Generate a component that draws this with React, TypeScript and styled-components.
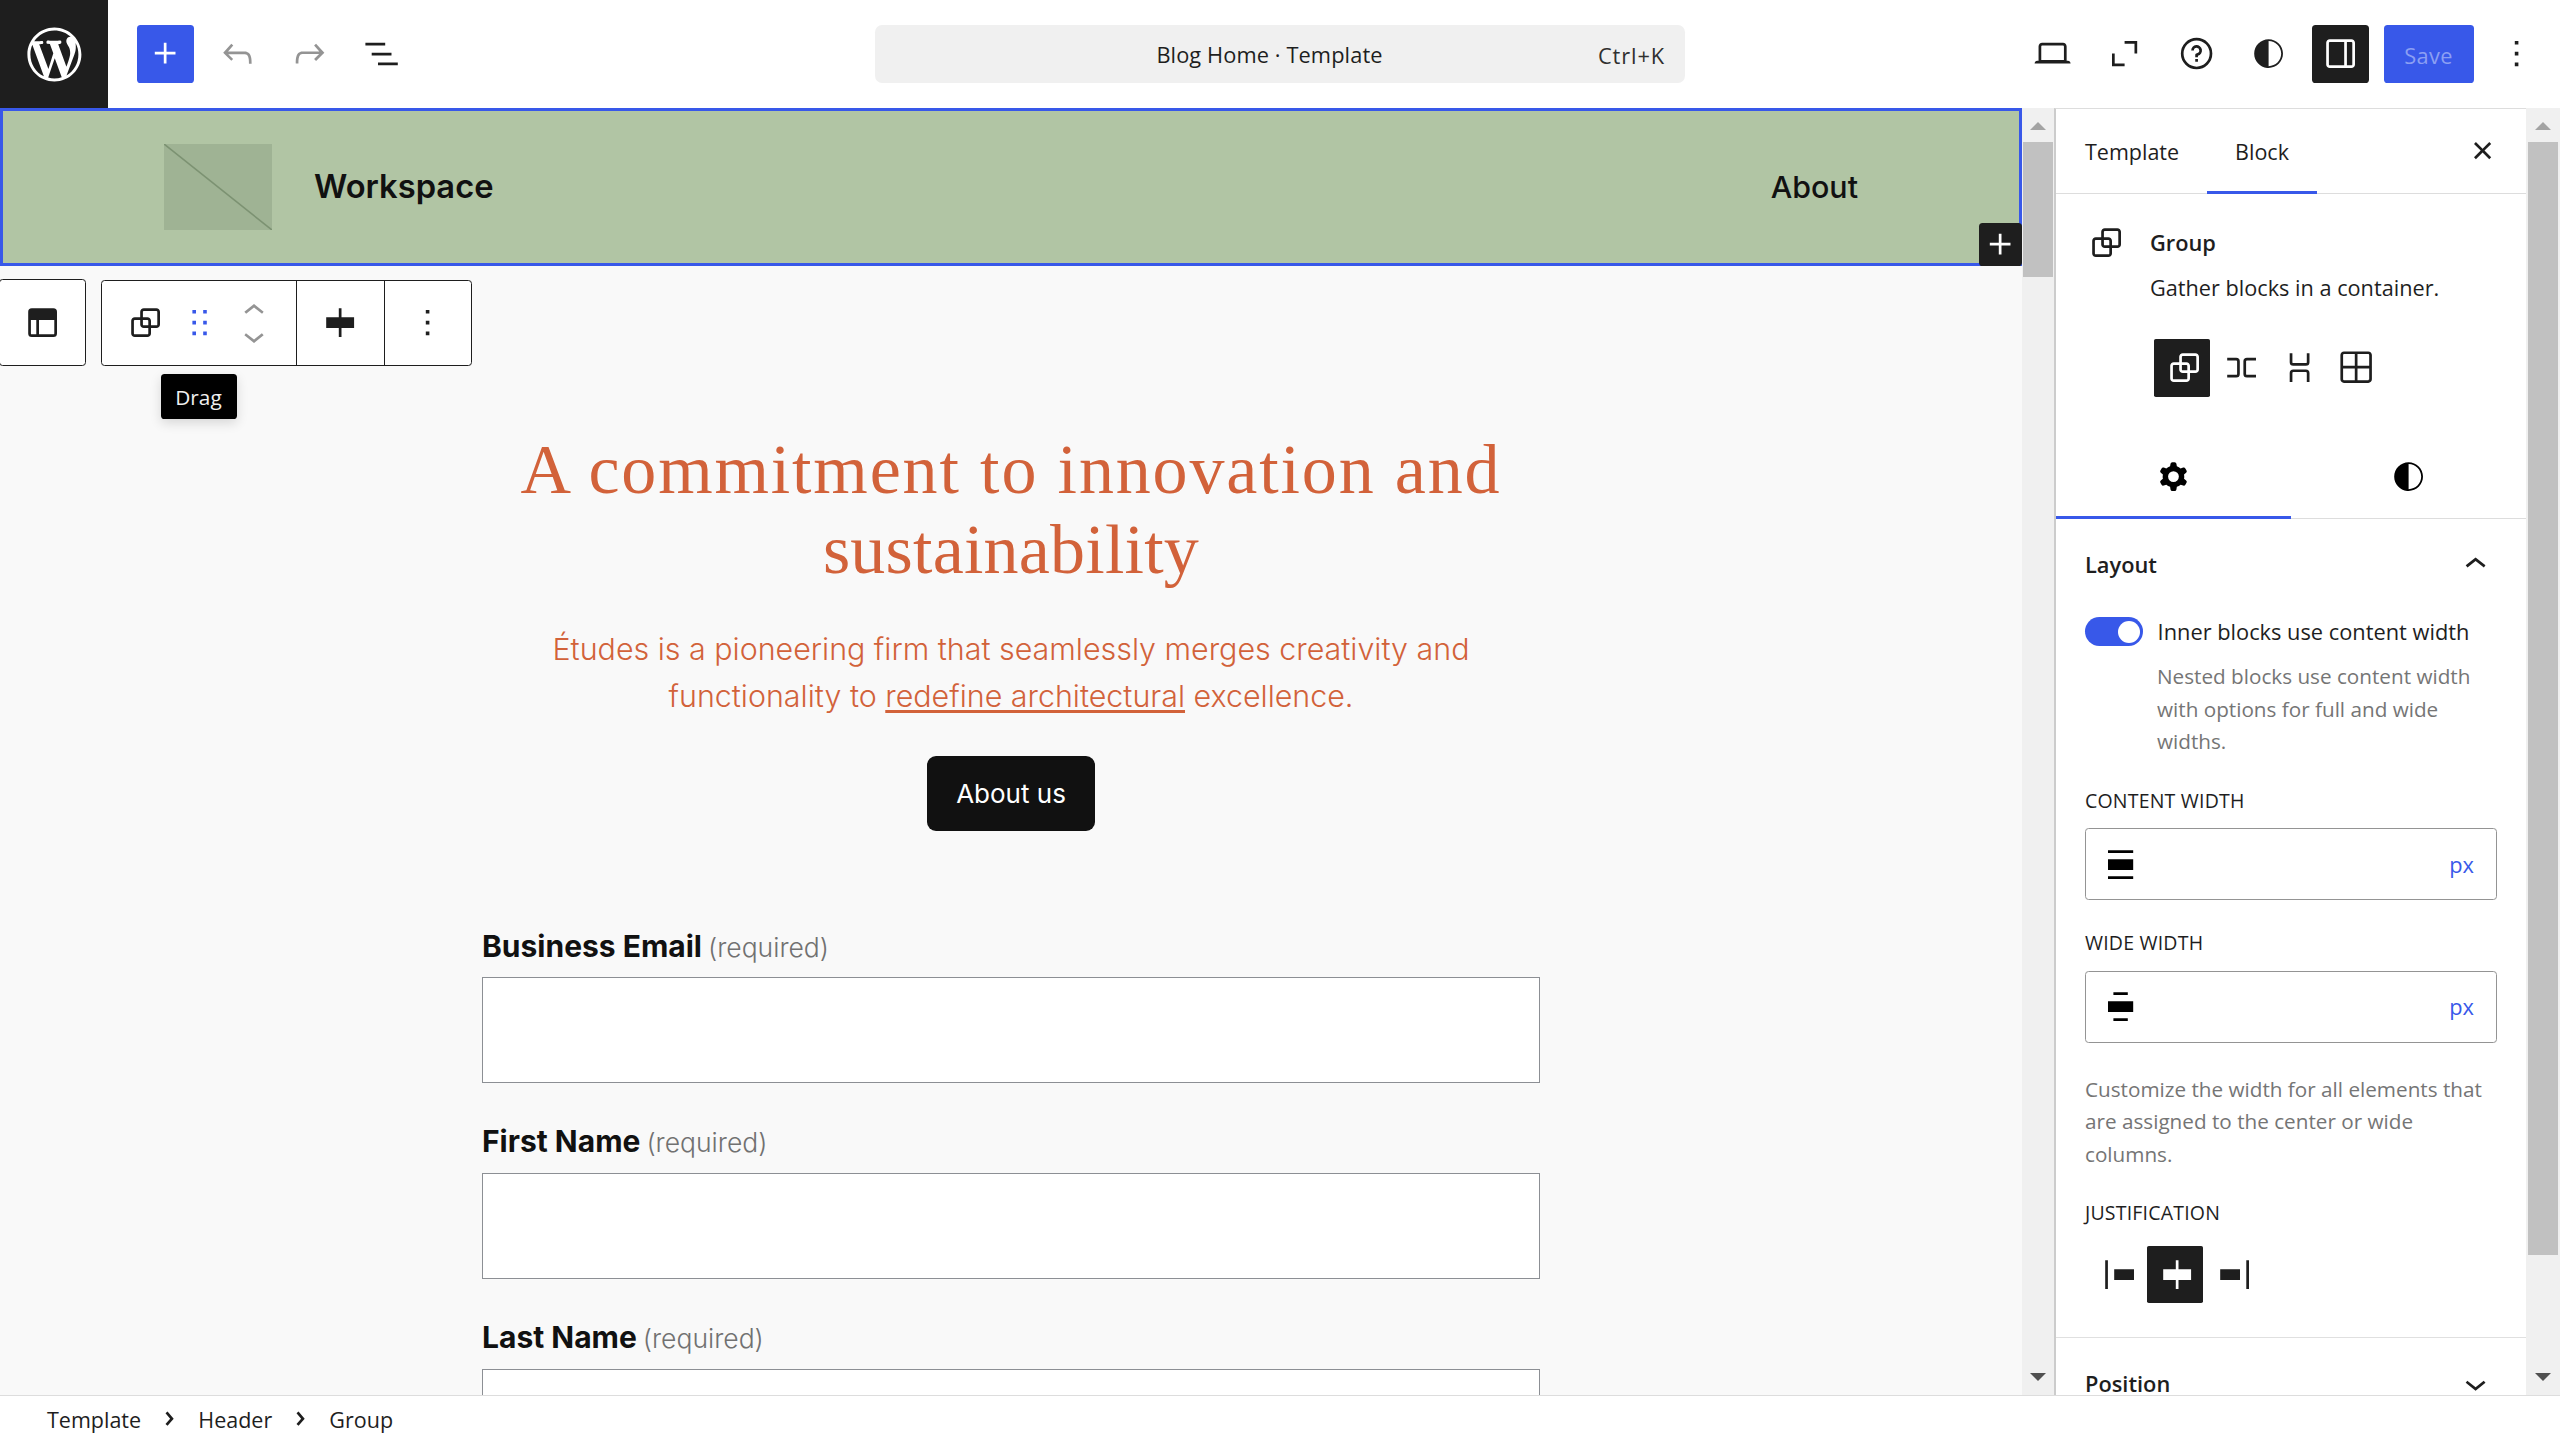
import React from 'react'
import styled, { createGlobalStyle, css } from 'styled-components'

const UI_FONT = `'Open Sans', 'Noto Sans', sans-serif`
const BODY_FONT = `Inter, 'Liberation Sans', sans-serif`
const HEADING_FONT = `'Liberation Serif', serif`

const INK = '#1e1e1e'
const ACCENT = '#3858e9'

const GlobalStyle = createGlobalStyle`
  * {
    box-sizing: border-box;
  }

  body {
    margin: 0;
    overflow: hidden;
    background: #fff;
  }

  button {
    margin: 0;
    padding: 0;
    border: 0;
    background: none;
    color: inherit;
    font: inherit;
    letter-spacing: inherit;
  }

  h1, h2, p {
    margin: 0;
  }
`

const ICONS = {
  plus: 'M11 12.5V17.5H12.5V12.5H17.5V11H12.5V6H11V11H6V12.5H11Z',
  undo:
    'M18.3 11.7c-.6-.6-1.4-.9-2.3-.9H6.7l2.9-3.3-1.1-1-4.5 5L8.5 16l1-1-2.7-2.7H16c.5 0 .9.2 1.3.5 1 1 1 3.4 1 4.5v.3h1.5v-.2c0-1.5 0-4.3-1.5-5.7z',
  redo:
    'M15.6 6.5l-1.1 1 2.9 3.3H8c-.9 0-1.7.3-2.3.9-1.4 1.5-1.4 4.2-1.4 5.6v.2h1.5v-.3c0-1.1 0-3.5 1-4.5.3-.3.7-.5 1.3-.5h9.2L14.5 15l1.1 1.1 4.6-4.6-4.6-5z',
  listView: 'M3 6h11v1.5H3V6Zm3.5 5.5h11V13h-11v-1.5ZM21 17H10v1.5h11V17Z',
  desktop:
    'M20.5 16h-.7V8c0-1.1-.9-2-2-2H6.2c-1.1 0-2 .9-2 2v8h-.7c-.8 0-1.5.7-1.5 1.5h20c0-.8-.7-1.5-1.5-1.5zM5.7 8c0-.3.2-.5.5-.5h11.6c.3 0 .5.2.5.5v7.6H5.7V8z',
  zoomOut: 'M12 5h7v7h-1.5V6.5H12V5ZM5 12h1.5v5.5H12V19H5v-7Z',
  help:
    'M12 4.75a7.25 7.25 0 100 14.5 7.25 7.25 0 000-14.5zM3.25 12a8.75 8.75 0 1117.5 0 8.75 8.75 0 01-17.5 0zM12 8.75a1.5 1.5 0 01.167 2.99c-.465.052-.917.44-.917 1.01V14h1.5v-.845A3 3 0 109 10.25h1.5a1.5 1.5 0 011.5-1.5zM11.25 15v1.5h1.5V15h-1.5z',
  styles:
    'M12 4c-4.4 0-8 3.6-8 8v.1c0 4.1 3.2 7.5 7.2 7.9h.8c4.4 0 8-3.6 8-8s-3.6-8-8-8zm0 15V5c3.9 0 7 3.1 7 7s-3.1 7-7 7z',
  drawer:
    'M18 4H6c-1.1 0-2 .9-2 2v12c0 1.1.9 2 2 2h12c1.1 0 2-.9 2-2V6c0-1.1-.9-2-2-2zm-4 14.5H6c-.3 0-.5-.2-.5-.5V6c0-.3.2-.5.5-.5h8v13zm4.5-.5c0 .3-.2.5-.5.5h-2.5v-13H18c.3 0 .5.2.5.5v12z',
  more: 'M13 19h-2v-2h2v2zm0-6h-2v-2h2v2zm0-6h-2V5h2v2z',
  header:
    'M18.5 10.5H10v8h8a.5.5 0 00.5-.5v-7.5zm-10 0h-3V18a.5.5 0 00.5.5h2.5v-8zM6 4a2 2 0 00-2 2v12a2 2 0 002 2h12a2 2 0 002-2V6a2 2 0 00-2-2H6z',
  group:
    'M18 4h-7c-1.1 0-2 .9-2 2v3H6c-1.1 0-2 .9-2 2v7c0 1.1.9 2 2 2h7c1.1 0 2-.9 2-2v-3h3c1.1 0 2-.9 2-2V6c0-1.1-.9-2-2-2zm-4.5 14c0 .3-.2.5-.5.5H6c-.3 0-.5-.2-.5-.5v-7c0-.3.2-.5.5-.5h3V13c0 1.1.9 2 2 2h2.5v3zm0-4.5H11c-.3 0-.5-.2-.5-.5v-2.5H13c.3 0 .5.2.5.5v2.5zm5-.5c0 .3-.2.5-.5.5h-3V11c0-1.1-.9-2-2-2h-2.5V6c0-.3.2-.5.5-.5h7c.3 0 .5.2.5.5v7z',
  drag:
    'M8 7h2V5H8v2zm0 6h2v-2H8v2zm0 6h2v-2H8v2zm6-14v2h2V5h-2zm0 8h2v-2h-2v2zm0 6h2v-2h-2v2z',
  chevronUp: 'M6.5 12.4L12 8l5.5 4.4-.9 1.2L12 10l-4.5 3.6-1-1.2z',
  chevronDown: 'M17.5 11.6L12 16l-5.5-4.4.9-1.2L12 14l4.5-3.6 1 1.2z',
  chevronRightSmall:
    'M10.8622 8.04053L14.2805 12.0286L10.8622 16.0167L9.72327 15.0405L12.3049 12.0286L9.72327 9.01672L10.8622 8.04053Z',
  justifyLeft: 'M9 9v6h11V9H9zM4 20h1.5V4H4v16z',
  justifyCenter: 'M12.5 15v5H11v-5H4V9h7V4h1.5v5h7v6h-7Z',
  justifyRight: 'M4 15h11V9H4v6zM18.5 4v16H20V4h-1.5z',
  close:
    'M12 13.06l3.712 3.713 1.061-1.06L13.061 12l3.712-3.712-1.06-1.06L12 10.938 8.288 7.227l-1.061 1.06L10.939 12l-3.712 3.712 1.06 1.061L12 13.061z',
  row:
    'M4 6.5h5a2 2 0 0 1 2 2v7a2 2 0 0 1-2 2H4V16h5a.5.5 0 0 0 .5-.5v-7A.5.5 0 0 0 9 8H4V6.5Zm16 0h-5a2 2 0 0 0-2 2v7a2 2 0 0 0 2 2h5V16h-5a.5.5 0 0 1-.5-.5v-7A.5.5 0 0 1 15 8h5V6.5Z',
  stack:
    'M17.5 4v5a2 2 0 0 1-2 2h-7a2 2 0 0 1-2-2V4H8v5a.5.5 0 0 0 .5.5h7A.5.5 0 0 0 16 9V4h1.5Zm0 16v-5a2 2 0 0 0-2-2h-7a2 2 0 0 0-2 2v5H8v-5a.5.5 0 0 1 .5-.5h7a.5.5 0 0 1 .5.5v5h1.5Z',
  grid:
    'm3 5c0-1.10457.89543-2 2-2h13.5c1.1046 0 2 .89543 2 2v13.5c0 1.1046-.8954 2-2 2h-13.5c-1.10457 0-2-.8954-2-2zm2-.5h6v6.5h-6.5v-6c0-.27614.22386-.5.5-.5zm-.5 8v6c0 .2761.22386.5.5.5h6v-6.5zm8 0v6.5h6c.2761 0 .5-.2239.5-.5v-6zm0-8v6.5h6.5v-6c0-.27614-.2239-.5-.5-.5z',
  cog:
    'M10.289 4.836A1 1 0 0111.275 4h1.306a1 1 0 01.987.836l.244 1.466c.787.26 1.503.679 2.108 1.218l1.393-.522a1 1 0 011.216.437l.653 1.13a1 1 0 01-.23 1.273l-1.148.944a6.025 6.025 0 010 2.435l1.149.946a1 1 0 01.23 1.272l-.653 1.13a1 1 0 01-1.216.437l-1.394-.522c-.605.54-1.32.958-2.108 1.218l-.244 1.466a1 1 0 01-.987.836h-1.306a1 1 0 01-.986-.836l-.244-1.466a5.995 5.995 0 01-2.108-1.218l-1.394.522a1 1 0 01-1.217-.436l-.653-1.131a1 1 0 01.23-1.272l1.149-.946a6.026 6.026 0 010-2.435l-1.148-.944a1 1 0 01-.23-1.272l.653-1.131a1 1 0 011.217-.437l1.393.522a5.994 5.994 0 012.108-1.218l.244-1.466zM14.929 12a3 3 0 11-6 0 3 3 0 016 0z',
  alignNone: 'M19 5.5H5V4h14v1.5ZM19 20H5v-1.5h14V20ZM5 9h14v6H5V9Z',
  stretchWide: 'M16 5.5H8V4h8v1.5ZM16 20H8v-1.5h8V20ZM5 9h14v6H5V9Z',
}

const WORDPRESS =
  'M20 10c0-5.51-4.49-10-10-10C4.48 0 0 4.49 0 10c0 5.52 4.48 10 10 10 5.51 0 10-4.48 10-10zM7.78 15.37L4.37 6.22c.55-.02 1.17-.08 1.17-.08.5-.06.44-1.13-.06-1.11 0 0-1.45.11-2.37.11-.18 0-.37 0-.58-.01C4.12 2.69 6.87 1.11 10 1.11c2.33 0 4.45.87 6.05 2.34-.68-.11-1.65.39-1.65 1.58 0 .74.45 1.36.9 2.1.35.61.55 1.36.55 2.46 0 1.49-1.4 5-1.4 5l-3.03-8.37c.54-.02.82-.17.82-.17.5-.05.44-1.25-.06-1.22 0 0-1.44.12-2.38.12-.87 0-2.33-.12-2.33-.12-.5-.03-.56 1.2-.06 1.22l.92.08 1.26 3.41zM17.41 10c.24-.64.74-1.87.43-4.25.7 1.29 1.05 2.71 1.05 4.25 0 3.29-1.73 6.24-4.4 7.78.97-2.59 1.94-5.2 2.92-7.78zM6.1 18.09C3.12 16.65 1.11 13.53 1.11 10c0-1.3.23-2.48.72-3.59C3.25 10.3 4.67 14.2 6.1 18.09zm4.03-6.63l2.58 6.98c-.86.29-1.76.45-2.71.45-.79 0-1.57-.11-2.29-.33.81-2.38 1.62-4.74 2.42-7.1z'

const Svg = styled.svg`
  display: block;
  flex-shrink: 0;
  fill: currentColor;
`

interface IconProps {
  name: keyof typeof ICONS
  size?: number
}

const Icon: React.FC<IconProps> = ({ name, size = 43.2 }) => (
  <Svg width={size} height={size} viewBox="0 0 24 24">
    <path d={ICONS[name]} fillRule="evenodd" clipRule="evenodd" />
  </Svg>
)

const Page = styled.div`
  display: flex;
  flex-direction: column;
  width: 2560px;
  height: 1440px;
  background: #fff;
  color: ${INK};
  font-family: ${UI_FONT};
  font-size: 21.8px;
`

/* Top bar */

const TopBar = styled.header`
  display: grid;
  grid-template-columns: 875px 810px 1fr;
  align-items: center;
  height: 108px;
  flex-shrink: 0;
`

const TopLeft = styled.div`
  display: flex;
  align-items: center;
  gap: 14.4px;
`

const SiteLogo = styled.div`
  display: flex;
  align-items: center;
  justify-content: center;
  width: 108px;
  height: 108px;
  margin-right: 14.4px;
  background: ${INK};
  color: #fff;
`

const ToolButton = styled.button<{ $variant?: 'primary' | 'pressed' | 'disabled' }>`
  display: flex;
  align-items: center;
  justify-content: center;
  width: 57.6px;
  height: 57.6px;
  border-radius: 3.6px;

  ${({ $variant }) =>
    $variant === 'primary' &&
    css`
      background: ${ACCENT};
      color: #fff;
    `}
  ${({ $variant }) =>
    $variant === 'pressed' &&
    css`
      background: ${INK};
      color: #fff;
    `}
  ${({ $variant }) =>
    $variant === 'disabled' &&
    css`
      color: #949494;
    `}
`

const CommandBar = styled.div`
  display: grid;
  grid-template-columns: 1fr auto 1fr;
  align-items: center;
  height: 57.6px;
  padding: 1px 20px 0 21px;
  border-radius: 7.2px;
  background: #f0f0f0;
`

const DocumentTitle = styled.span`
  margin-right: 22px;
  letter-spacing: 0.1px;
`

const Shortcut = styled.span`
  justify-self: end;
  padding-top: 1px;
  color: #2f2f2f;
  letter-spacing: 0.9px;
`

const TopRight = styled.div`
  display: flex;
  align-items: center;
  justify-content: flex-end;
  gap: 14.4px;
  padding-right: 14.4px;
`

const SaveButton = styled.button`
  width: 90px;
  height: 57.6px;
  padding-top: 3px;
  border-radius: 3.6px;
  background: ${ACCENT};
  color: #8b9ff3;
  letter-spacing: 0.4px;
`

/* Editor body */

const Main = styled.div`
  display: flex;
  height: 1287px;
  flex-shrink: 0;
`

const Canvas = styled.main`
  position: relative;
  width: 2022px;
  height: 100%;
  overflow: hidden;
  background: #f9f9f9;
  color: #111;
  font-family: ${BODY_FONT};
`

const SiteHeader = styled.div`
  position: relative;
  display: flex;
  align-items: center;
  height: 158px;
  padding: 0 161px;
  border: 3px solid ${ACCENT};
  background: #b1c5a4;
`

const LogoPlaceholder = styled.div`
  width: 108px;
  height: 86px;
  background: #9fb394;

  svg {
    display: block;
  }
`

const SiteTitle = styled.span`
  margin-left: 42px;
  padding-bottom: 2px;
  font-size: 32.7px;
  font-weight: 600;
`

const NavLink = styled.span`
  margin-left: auto;
  font-size: 30.4px;
  font-weight: 500;
`

const Appender = styled.button`
  position: absolute;
  right: -3px;
  bottom: -3px;
  width: 43.2px;
  height: 43.2px;
  border-radius: 3.6px;
  background: ${INK};
  color: #fff;
`

const BlockTools = styled.div`
  position: absolute;
  top: 171px;
  left: -1px;
  display: flex;
  align-items: flex-end;
  gap: 15px;
`

const ToolGroup = styled.div<{ $height: number }>`
  display: flex;
  height: ${({ $height }) => $height}px;
  border: 1px solid ${INK};
  border-radius: 3.6px;
  background: #fff;
  color: ${INK};
`

const ToolCell = styled.div<{ $width: number; $divided?: boolean }>`
  display: flex;
  align-items: center;
  justify-content: center;
  width: ${({ $width }) => $width}px;
  border-left: ${({ $divided }) => ($divided ? `1px solid ${INK}` : '0')};
`

const DragHandle = styled(ToolCell)`
  color: ${ACCENT};
`

const Movers = styled(ToolCell)`
  flex-direction: column;
  color: #949494;

  svg + svg {
    margin-top: -17px;
  }
`

const Tooltip = styled.div`
  position: absolute;
  top: 266px;
  left: 161px;
  width: 76px;
  height: 45px;
  border-radius: 3.6px;
  background: #000;
  box-shadow: 0 4px 12px rgba(0, 0, 0, 0.14);
  color: #f0f0f0;
  font-family: ${UI_FONT};
  font-size: 20.8px;
  line-height: 46px;
  text-align: center;
  text-indent: -1px;
`

const Content = styled.div`
  display: flex;
  flex-direction: column;
  align-items: center;
  padding-top: 163.5px;
  text-align: center;
`

const Heading = styled.h1`
  color: #d2623a;
  font-family: ${HEADING_FONT};
  font-size: 70px;
  font-weight: 400;
  line-height: 80.6px;
  white-space: nowrap;
`

const HeadingLine = styled.span<{ $tracking: number }>`
  display: block;
  letter-spacing: ${({ $tracking }) => $tracking}px;
`

const Intro = styled.p`
  margin-top: 35.6px;
  color: #d2623a;
  font-size: 30.4px;
  font-weight: 300;
  line-height: 46.8px;
  white-space: nowrap;

  a {
    text-decoration: underline;
    text-decoration-thickness: 3px;
    text-underline-offset: 3px;
    text-decoration-skip-ink: none;
  }
`

const AboutButton = styled.button`
  width: 168px;
  height: 75px;
  margin-top: 36px;
  border-radius: 9px;
  background: #111;
  color: #fff;
  font-size: 26px;
`

const Form = styled.form`
  width: 1058px;
  margin-top: 57px;
  text-align: left;
`

const Label = styled.label`
  display: block;
  height: 46.8px;
  margin-top: 35px;
  font-size: 30px;
  font-weight: 700;
  line-height: 46.8px;
  white-space: nowrap;

  small {
    margin-left: 6px;
    color: #717171;
    font-size: 26.5px;
    font-weight: 300;
    line-height: 1;
  }
`

const Field = styled.div`
  height: 106px;
  margin-top: 7.8px;
  border: 1px solid #8c8f94;
  background: #fff;
`

/* Scrollbars */

const Track = styled.div<{ $width: number }>`
  display: flex;
  flex-direction: column;
  align-items: center;
  width: ${({ $width }) => $width}px;
  height: 100%;
  padding: 14px 0;
  flex-shrink: 0;
  background: #f0f0f0;
`

const Arrow = styled.i<{ $down?: boolean }>`
  border: 8px solid transparent;
  ${({ $down }) =>
    $down
      ? css`
          margin-top: auto;
          border-top-color: #505050;
          border-bottom-width: 0;
        `
      : css`
          border-bottom-color: #a3a3a3;
          border-top-width: 0;
        `}
`

const Thumb = styled.div<{ $height: number }>`
  width: 30px;
  height: ${({ $height }) => $height}px;
  margin-top: 12px;
  background: #c1c1c1;
`

/* Settings sidebar */

const Sidebar = styled.aside`
  width: 472px;
  height: 100%;
  overflow: hidden;
  border-top: 1px solid #ddd;
  border-left: 2px solid #ccc;
`

const SidebarTabs = styled.div`
  display: flex;
  height: 85px;
  padding-right: 15px;
  border-bottom: 1px solid #ddd;
`

const SidebarTab = styled.button<{ $active?: boolean }>`
  height: 85px;
  padding: 0 28px;
  box-shadow: ${({ $active }) => ($active ? `inset 0 -3px ${ACCENT}` : 'none')};
  font-size: 21.5px;

  &:first-child {
    padding-left: 29px;
  }
`

const CloseButton = styled(ToolButton)`
  margin: 13px 0 0 auto;
`

const BlockCard = styled.div`
  display: grid;
  grid-template-columns: 65px 1fr;
  padding: 32px 0 0 29px;
  line-height: 33px;

  > svg {
    margin: -5px 0 -6px;
  }
`

const BlockTitle = styled.h2`
  font-size: 21.8px;
  font-weight: 600;
`

const BlockText = styled.p`
  grid-column: 2;
  margin-top: 12px;
  font-size: 21.7px;
  white-space: nowrap;
`

const Variations = styled.div`
  display: flex;
  grid-column: 2;
  margin: 35px 0 0 4px;
`

const SegmentButton = styled.button<{ $active?: boolean }>`
  display: flex;
  align-items: center;
  justify-content: center;
  width: 56.4px;
  height: 57.6px;
  margin-right: 1.2px;
  padding-left: 4px;
  border-radius: 1.8px;
  background: ${({ $active }) => ($active ? INK : 'none')};
  color: ${({ $active }) => ($active ? '#fff' : INK)};
`

const InspectorTabs = styled.div`
  display: grid;
  grid-template-columns: 1fr 1fr;
  height: 86px;
  margin-top: 36.6px;
  border-bottom: 1px solid #ddd;
  color: #000;
`

const InspectorTab = styled.button<{ $active?: boolean }>`
  display: flex;
  align-items: center;
  justify-content: center;
  height: 86px;
  box-shadow: ${({ $active }) => ($active ? `inset 0 -3px ${ACCENT}` : 'none')};
`

const Panel = styled.section`
  padding: 0 29px 34px;
  border-bottom: 1px solid #e0e0e0;
`

const PanelHeader = styled.h2`
  display: flex;
  align-items: center;
  justify-content: space-between;
  height: 89px;
  padding-top: 1px;
  font-size: 21.8px;
  font-weight: 600;
`

const ToggleRow = styled.div`
  display: flex;
  align-items: center;
  gap: 15px;
  height: 33px;
  margin-top: 7px;
  white-space: nowrap;
`

const Toggle = styled.span`
  display: flex;
  align-items: center;
  justify-content: flex-end;
  width: 57.6px;
  height: 28.8px;
  padding-right: 3px;
  border-radius: 14.4px;
  background: ${ACCENT};

  &::after {
    width: 22px;
    height: 22px;
    border-radius: 50%;
    background: #fff;
    content: '';
  }
`

const HelpText = styled.p<{ $indent?: boolean }>`
  margin: ${({ $indent }) => ($indent ? '12px 0 0 72px' : '30px 0 0')};
  color: #757575;
  font-size: 20.7px;
  line-height: 32.5px;
  white-space: nowrap;
`

const Caption = styled.div`
  margin-top: 30px;
  font-size: 19.5px;
  font-weight: 500;
  line-height: 26px;
  letter-spacing: 0.2px;
  text-transform: uppercase;
`

const UnitInput = styled.div`
  display: flex;
  align-items: center;
  justify-content: space-between;
  width: 412px;
  height: 72px;
  margin-top: 14.5px;
  padding: 0 22px 0 13px;
  border: 1px solid #949494;
  border-radius: 3.6px;
  color: #000;

  span {
    color: ${ACCENT};
  }
`

const Justification = styled.div`
  display: flex;
  margin: 19.5px 0 0 4.4px;
`

const Footer = styled.footer`
  display: flex;
  align-items: center;
  height: 45px;
  padding: 2px 0 0 47px;
  border-top: 1px solid #ddd;
  font-size: 21.5px;

  svg {
    margin: 0 7.5px 0 6.5px;
  }
`

const fields = ['Business Email', 'First Name', 'Last Name']

const App: React.FC = () => (
  <Page>
    <GlobalStyle />
    <TopBar>
      <TopLeft>
        <SiteLogo>
          <Svg width={64.8} height={64.8} viewBox="-2 -2 24 24">
            <path d={WORDPRESS} />
          </Svg>
        </SiteLogo>
        <ToolButton $variant="primary">
          <Icon name="plus" />
        </ToolButton>
        <ToolButton $variant="disabled">
          <Icon name="undo" />
        </ToolButton>
        <ToolButton $variant="disabled">
          <Icon name="redo" />
        </ToolButton>
        <ToolButton>
          <Icon name="listView" />
        </ToolButton>
      </TopLeft>
      <CommandBar>
        <i />
        <DocumentTitle>Blog Home · Template</DocumentTitle>
        <Shortcut>Ctrl+K</Shortcut>
      </CommandBar>
      <TopRight>
        <ToolButton>
          <Icon name="desktop" />
        </ToolButton>
        <ToolButton>
          <Icon name="zoomOut" />
        </ToolButton>
        <ToolButton>
          <Icon name="help" />
        </ToolButton>
        <ToolButton>
          <Icon name="styles" />
        </ToolButton>
        <ToolButton $variant="pressed">
          <Icon name="drawer" />
        </ToolButton>
        <SaveButton>Save</SaveButton>
        <ToolButton>
          <Icon name="more" />
        </ToolButton>
      </TopRight>
    </TopBar>

    <Main>
      <Canvas>
        <SiteHeader>
          <LogoPlaceholder>
            <svg width="108" height="86">
              <path d="M0 0L108 86" stroke="#7c9272" strokeWidth="1.6" />
            </svg>
          </LogoPlaceholder>
          <SiteTitle>Workspace</SiteTitle>
          <NavLink>About</NavLink>
          <Appender>
            <Icon name="plus" />
          </Appender>
        </SiteHeader>
        <Content>
          <Heading>
            <HeadingLine $tracking={1.85}>A commitment to innovation and</HeadingLine>
            <HeadingLine $tracking={0.2}>sustainability</HeadingLine>
          </Heading>
          <Intro>
            Études is a pioneering firm that seamlessly merges creativity and
            <br />
            functionality to <a>redefine architectural</a> excellence.
          </Intro>
          <AboutButton>About us</AboutButton>
          <Form>
            {fields.map(field => (
              <React.Fragment key={field}>
                <Label>
                  {field}
                  <small>(required)</small>
                </Label>
                <Field />
              </React.Fragment>
            ))}
          </Form>
        </Content>

        <BlockTools>
          <ToolGroup $height={87}>
            <ToolCell $width={85}>
              <Icon name="header" />
            </ToolCell>
          </ToolGroup>
          <ToolGroup $height={86}>
            <ToolCell $width={87}>
              <Icon name="group" />
            </ToolCell>
            <DragHandle $width={22}>
              <Icon name="drag" />
            </DragHandle>
            <Movers $width={85}>
              <Icon name="chevronUp" size={42} />
              <Icon name="chevronDown" size={42} />
            </Movers>
            <ToolCell $width={88} $divided>
              <Icon name="justifyCenter" />
            </ToolCell>
            <ToolCell $width={87} $divided>
              <Icon name="more" />
            </ToolCell>
          </ToolGroup>
        </BlockTools>
        <Tooltip>Drag</Tooltip>
      </Canvas>
      <Track $width={32}>
        <Arrow />
        <Thumb $height={135} />
        <Arrow $down />
      </Track>

      <Sidebar>
        <SidebarTabs>
          <SidebarTab>Template</SidebarTab>
          <SidebarTab $active>Block</SidebarTab>
          <CloseButton>
            <Icon name="close" />
          </CloseButton>
        </SidebarTabs>
        <BlockCard>
          <Icon name="group" />
          <BlockTitle>Group</BlockTitle>
          <BlockText>Gather blocks in a container.</BlockText>
          <Variations>
            <SegmentButton $active>
              <Icon name="group" />
            </SegmentButton>
            <SegmentButton>
              <Icon name="row" />
            </SegmentButton>
            <SegmentButton>
              <Icon name="stack" />
            </SegmentButton>
            <SegmentButton>
              <Icon name="grid" />
            </SegmentButton>
          </Variations>
        </BlockCard>
        <InspectorTabs>
          <InspectorTab $active>
            <Icon name="cog" />
          </InspectorTab>
          <InspectorTab>
            <Icon name="styles" />
          </InspectorTab>
        </InspectorTabs>
        <Panel>
          <PanelHeader>
            Layout
            <Icon name="chevronUp" />
          </PanelHeader>
          <ToggleRow>
            <Toggle />
            Inner blocks use content width
          </ToggleRow>
          <HelpText $indent>
            Nested blocks use content width
            <br />
            with options for full and wide
            <br />
            widths.
          </HelpText>
          <Caption>Content width</Caption>
          <UnitInput>
            <Icon name="alignNone" />
            <span>px</span>
          </UnitInput>
          <Caption>Wide width</Caption>
          <UnitInput>
            <Icon name="stretchWide" />
            <span>px</span>
          </UnitInput>
          <HelpText>
            Customize the width for all elements that
            <br />
            are assigned to the center or wide
            <br />
            columns.
          </HelpText>
          <Caption>Justification</Caption>
          <Justification>
            <SegmentButton>
              <Icon name="justifyLeft" />
            </SegmentButton>
            <SegmentButton $active>
              <Icon name="justifyCenter" />
            </SegmentButton>
            <SegmentButton>
              <Icon name="justifyRight" />
            </SegmentButton>
          </Justification>
        </Panel>
        <Panel>
          <PanelHeader>
            Position
            <Icon name="chevronDown" />
          </PanelHeader>
        </Panel>
      </Sidebar>
      <Track $width={34}>
        <Arrow />
        <Thumb $height={1113} />
        <Arrow $down />
      </Track>
    </Main>

    <Footer>
      Template
      <Icon name="chevronRightSmall" />
      Header
      <Icon name="chevronRightSmall" />
      Group
    </Footer>
  </Page>
)

export default App
